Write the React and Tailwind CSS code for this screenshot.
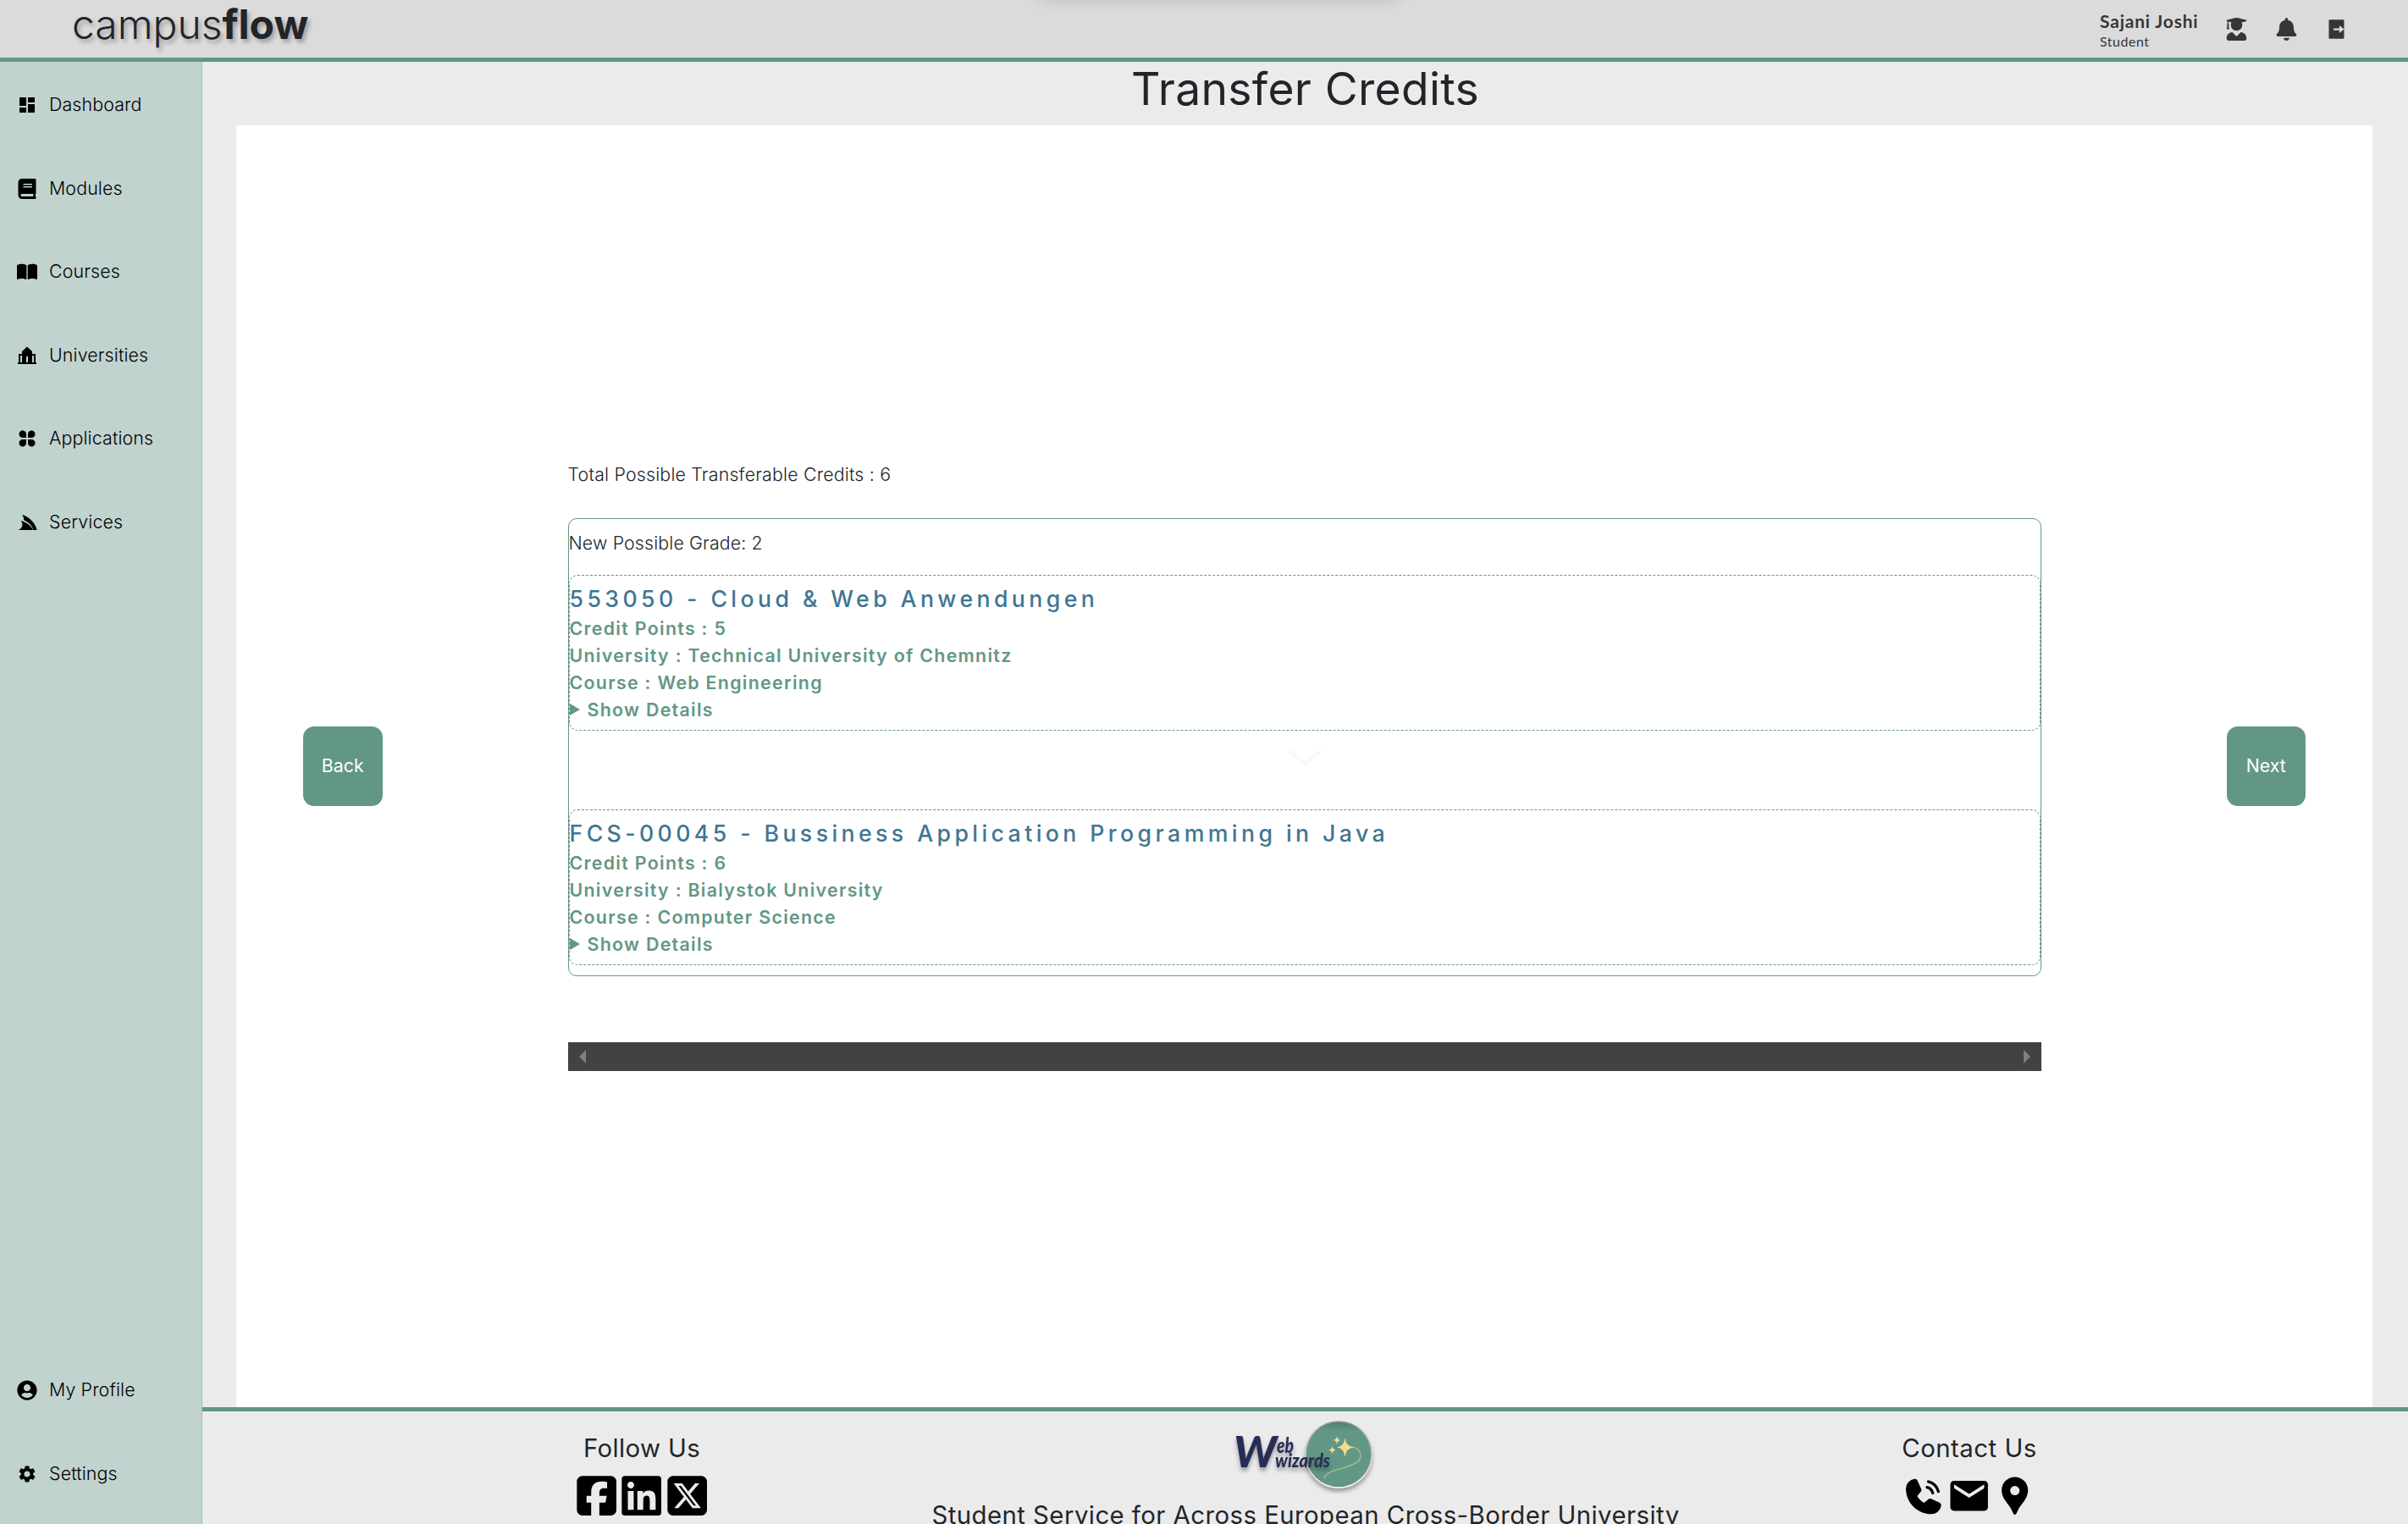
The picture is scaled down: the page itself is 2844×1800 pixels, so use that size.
import React from "react";
import { FaBook, FaUserCircle, FaServicestack, FaUserGraduate, FaBell, FaLinkedin } from "react-icons/fa";
import { FaBookOpen, FaSquareFacebook, FaSquareXTwitter } from "react-icons/fa6";
import { MdDashboard, MdSettings, MdEmail, MdLocationPin } from "react-icons/md";
import { RiAppsFill, RiLogoutBoxRFill } from "react-icons/ri";
import { PiPhoneCallFill } from "react-icons/pi";

function HallIcon({ size = 24, className }) {
  return (
    <svg width={size} height={size} viewBox="0 0 24 24" className={className} fill="currentColor">
      <path d="M12 1.500 L6 7 V10 H2 V20 H1 V22 H23 V20 H22 V10 H18 V7 Z M4 12 H6 V20 H4 Z M18 12 H20 V20 H18 Z M11 13 H13 V20 H11 Z" fillRule="evenodd" />
    </svg>
  );
}

const mainNav = [
  ["Dashboard", MdDashboard],
  ["Modules", FaBook],
  ["Courses", FaBookOpen],
  ["Universities", HallIcon],
  ["Applications", RiAppsFill],
  ["Services", FaServicestack],
];
const bottomNav = [
  ["My Profile", FaUserCircle],
  ["Settings", MdSettings],
];

function NavItem({ label, Icon }) {
  return (
    <a className="flex h-[98.5px] items-center pl-5 text-black">
      <Icon size={24} className="shrink-0" />
      <span className="ml-[14px] text-[21.33px] font-[330] tracking-[0.15px]">{label}</span>
    </a>
  );
}

function Header() {
  return (
    <header className="relative flex h-[73px] shrink-0 items-center justify-between overflow-hidden border-b-[5px] border-[#629786] bg-[#dbdbdb]">
      <div className="absolute -top-10 left-[1222px] h-10 w-[436px] rounded-full shadow-[0_0_18px_rgba(0,0,0,0.14)]" />
      <div className="-mt-2.5 pl-[85px] text-5xl leading-none font-[320] text-[#212529] [text-shadow:3px_4px_5px_rgba(0,0,0,0.28)]">
        campus<span className="font-bold">flow</span>
      </div>
      <div className="flex items-center pr-[71px] text-[#363636]">
        <div className="w-[148px] pt-1 font-['Lato']">
          <div className="text-[21px] leading-6 font-bold tracking-[0.8px]">Sajani Joshi</div>
          <div className="text-base leading-[23px] tracking-[0.5px]">Student</div>
        </div>
        <FaUserGraduate size={27} />
        <FaBell size={27} className="ml-8" />
        <RiLogoutBoxRFill size={27} className="ml-8" />
      </div>
    </header>
  );
}

function ModuleCard({ title, lines }) {
  return (
    <div className="h-[184px] rounded-[10px] border border-dashed border-[#629786] text-[21.33px] leading-8 font-semibold tracking-[1.31px] text-[#629786]">
      <h2 className="mt-[10px] h-9 text-[26.67px] leading-[34px] font-[540] tracking-[4.42px] text-[#3f7693]">{title}</h2>
      {lines.map((l) => (
        <div key={l}>{l}</div>
      ))}
      <div className="flex items-center">
        <svg width="12" height="14" viewBox="0 0 12 14" className="mr-[9px]" fill="currentColor"><path d="M0 0 L12 7 L0 14 Z" /></svg>
        Show Details
      </div>
    </div>
  );
}

function NavButton({ children }) {
  return <button className="h-[94px] w-[93.5px] rounded-[13px] bg-[#629786] text-[21.33px] text-white">{children}</button>;
}

function Logo() {
  return (
    <svg width="180" height="94" viewBox="0 0 180 94" className="shrink-0">
      <defs>
        <filter id="lift" x="-20%" y="-20%" width="140%" height="150%">
          <feDropShadow dx="0" dy="4" stdDeviation="2.5" floodColor="#000" floodOpacity="0.35" />
        </filter>
        <linearGradient id="rim" x1="0" y1="0" x2="0" y2="1">
          <stop offset="0" stopColor="#8f9a94" />
          <stop offset="1" stopColor="#fbfaf0" />
        </linearGradient>
        <linearGradient id="disc" x1="0" y1="0" x2="0" y2="1">
          <stop offset="0" stopColor="#517d6f" />
          <stop offset="0.14" stopColor="#629786" />
        </linearGradient>
      </defs>
      <g filter="url(#lift)">
        <circle cx="129" cy="48" r="39" fill="url(#disc)" stroke="url(#rim)" strokeWidth="1.5" />
      </g>
      <path d="M139 39.500 C153 37 158 48 153 55 C145 65 115 64 112 76" fill="none" stroke="#a9bf8b" strokeWidth="1.4" />
      <g fill="#f0dd8b">
        <path d="M136.500 28 Q137.500 38.500 147 39.500 Q137.500 40.500 136.500 51 Q135.500 40.500 127 39.500 Q135.500 38.500 136.500 28Z" />
        <path d="M127 26 Q127.500 30.500 131.500 31 Q127.500 31.500 127 36 Q126.500 31.500 122.500 31 Q126.500 30.500 127 26Z" />
        <path d="M121.500 37.500 Q122 42 126 42.500 Q122 43 121.500 48 Q121 43 117 42.500 Q121 42 121.500 37.500Z" />
      </g>
      <g filter="url(#lift)" fill="#262f55" fontFamily="Lato" fontStyle="italic" fontWeight="900">
        <text x="5" y="63" fontSize="52" textLength="51" lengthAdjust="spacingAndGlyphs">W</text>
        <text x="56" y="46" fontSize="24" textLength="20" lengthAdjust="spacingAndGlyphs">eb</text>
        <text x="54" y="63" fontSize="22" textLength="65" lengthAdjust="spacingAndGlyphs">wizards</text>
      </g>
    </svg>
  );
}

function Footer() {
  return (
    <footer className="flex h-[138px] shrink-0 justify-between overflow-hidden border-t-[5px] border-[#629786] text-[#212529]">
      <div className="ml-[438px] flex w-[162px] flex-col items-center pt-[22px]">
        <h4 className="text-[29.33px] leading-[44px] font-[430] tracking-[0.4px]">Follow Us</h4>
        <div className="mt-[7px] flex text-black">
          <FaSquareFacebook size={53.33} />
          <FaLinkedin size={53.33} />
          <FaSquareXTwitter size={53.33} />
        </div>
      </div>
      <div className="flex w-[900px] flex-col items-center pt-[3px]">
        <Logo />
        <p className="mt-1 text-[29.33px] leading-[44px] font-[430] tracking-[0.46px] whitespace-nowrap">Student Service for Across European Cross-Border University</p>
      </div>
      <div className="mr-[437px] flex w-[162px] flex-col items-center pt-[22px]">
        <h4 className="text-[29.33px] leading-[44px] font-[430] tracking-[0.5px]">Contact Us</h4>
        <div className="mt-[7px] flex text-black">
          <PiPhoneCallFill size={53.33} />
          <MdEmail size={53.33} />
          <MdLocationPin size={53.33} />
        </div>
      </div>
    </footer>
  );
}

export default function App() {
  return (
    <div className="flex h-[1800px] w-[2844px] flex-col overflow-hidden bg-[#ebebeb] font-['Inter',sans-serif] text-[#212529]">
      <Header />
      <div className="flex min-h-0 flex-1">
        <aside className="flex w-[239px] shrink-0 flex-col justify-between border-r border-[#a9bab9] bg-[#c1d3cf] pt-[2px] pb-[10px]">
          <nav>{mainNav.map(([l, I]) => <NavItem key={l} label={l} Icon={I} />)}</nav>
          <nav>{bottomNav.map(([l, I]) => <NavItem key={l} label={l} Icon={I} />)}</nav>
        </aside>
        <div className="flex min-w-0 flex-1 flex-col">
          <h1 className="h-[75px] text-center text-[53.33px] leading-[64px] font-[440] tracking-[0.36px]">Transfer Credits</h1>
          <main className="mr-[42px] ml-10 flex flex-1 items-center justify-between bg-white pr-[79px] pl-[79px]">
            <NavButton>Back</NavButton>
            <section className="h-[722px] w-[1740px]">
              <p className="text-[21.33px] leading-8 font-[330] tracking-[0.2px]">Total Possible Transferable Credits : 6</p>
              <div className="mt-9 h-[541px] rounded-[10px] border border-[#629786]">
                <p className="mt-3 h-[54px] text-[21.33px] leading-8 font-[330] tracking-[0.15px]">New Possible Grade: 2</p>
                <ModuleCard title="553050 - Cloud & Web Anwendungen" lines={["Credit Points : 5", "University : Technical University of Chemnitz", "Course : Web Engineering"]} />
                <div className="flex h-[93px] justify-center pt-[22px]">
                  <svg width="40" height="20" viewBox="0 0 40 20" fill="none" stroke="#f6faf9" strokeWidth="4.500" strokeLinecap="round" strokeLinejoin="round"><path d="M3 3 L20 17 L37 3" /></svg>
                </div>
                <ModuleCard title="FCS-00045 - Bussiness Application Programming in Java" lines={["Credit Points : 6", "University : Bialystok University", "Course : Computer Science"]} />
              </div>
              <div className="mt-[78px] flex h-[34px] items-center justify-between bg-[#424242] px-[13px] text-[#808080]">
                <svg width="8" height="16" fill="currentColor"><path d="M8 0 L0 8 L8 16 Z" /></svg>
                <svg width="8" height="16" fill="currentColor"><path d="M0 0 L8 8 L0 16 Z" /></svg>
              </div>
            </section>
            <NavButton>Next</NavButton>
          </main>
          <Footer />
        </div>
      </div>
    </div>
  );
}
